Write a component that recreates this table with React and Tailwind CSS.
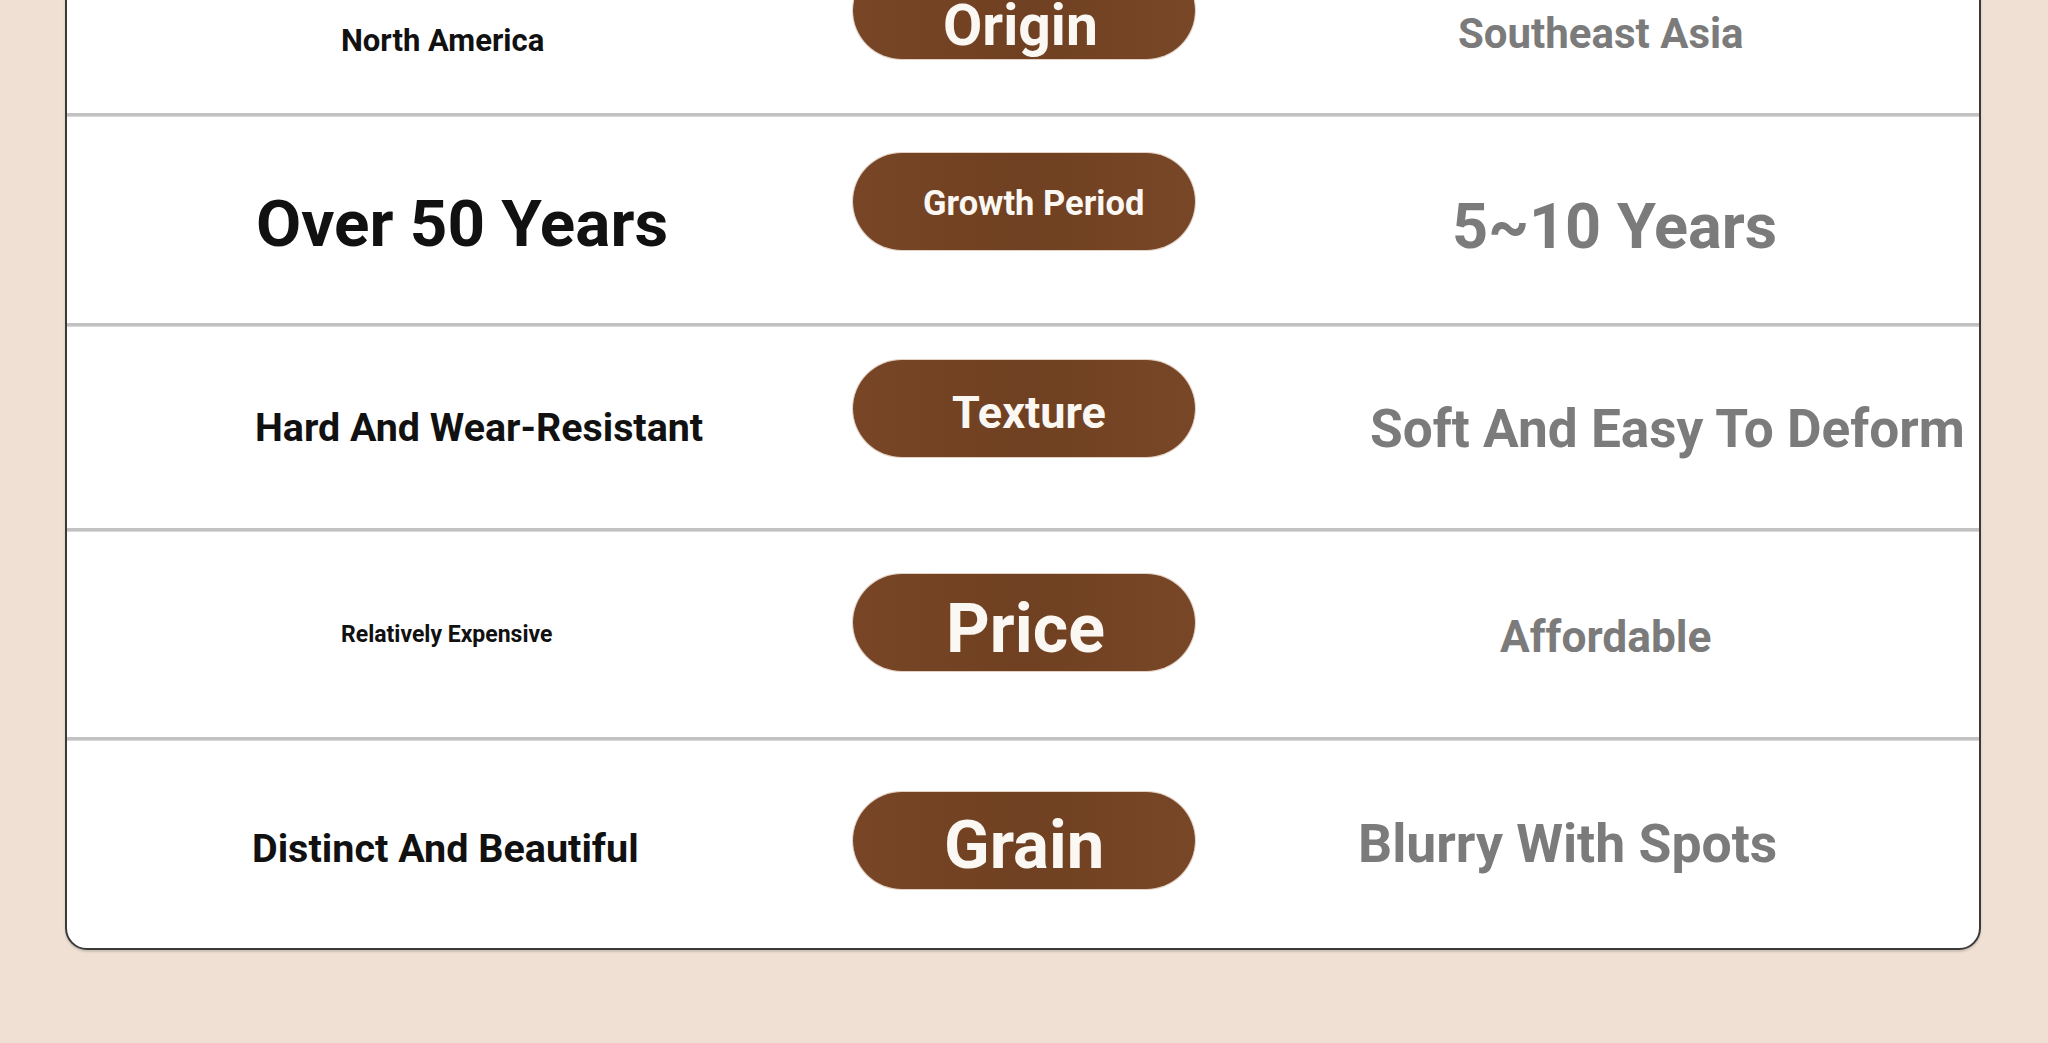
import React from "react";

const rows = [
  {
    h: "h-[206px]",
    left: { text: "North America", cls: "mt-[118px] pl-[274px] text-[31px]" },
    pill: { mt: "mt-[55px]", text: "Origin", cls: "pt-[35px] pl-[90px] text-[57px]" },
    right: { text: "Southeast Asia", cls: "mt-[106px] pl-[263px] text-[42px]" },
  },
  {
    h: "h-[206px]",
    left: { text: "Over 50 Years", cls: "mt-[74px] pl-[189px] text-[65.6px]" },
    pill: { mt: "mt-[36px]", text: "Growth Period", cls: "pt-[33px] pl-[70px] text-[34.5px]" },
    right: { text: "5~10 Years", cls: "mt-[78px] pl-[257px] text-[63px]" },
  },
  {
    h: "h-[201px]",
    left: { text: "Hard And Wear-Resistant", cls: "mt-[81px] pl-[188px] text-[39.4px]" },
    pill: { mt: "mt-[33px]", text: "Texture", cls: "pt-[30px] pl-[99px] text-[45px]" },
    right: { text: "Soft And Easy To Deform", cls: "mt-[76px] pl-[175px] text-[53.2px]" },
  },
  {
    h: "h-[205px]",
    left: { text: "Relatively Expensive", cls: "mt-[91px] pl-[274px] text-[23px]" },
    pill: { mt: "mt-[42px]", text: "Price", cls: "pt-[21px] pl-[93px] text-[68px]" },
    right: { text: "Affordable", cls: "mt-[83px] pl-[305px] text-[44.3px]" },
  },
  {
    h: "h-[207px]",
    left: { text: "Distinct And Beautiful", cls: "mt-[88px] pl-[185px] text-[39.5px]" },
    pill: { mt: "mt-[51px]", text: "Grain", cls: "pt-[20px] pl-[91px] text-[67px]" },
    right: { text: "Blurry With Spots", cls: "mt-[76px] pl-[163px] text-[53.5px]" },
  },
];

function Row({ row }) {
  return (
    <div className={`flex items-start ${row.h}`}>
      <div className="w-[786px] shrink-0">
        <div className={`font-bold leading-none whitespace-nowrap text-[#111111] ${row.left.cls}`}>
          {row.left.text}
        </div>
      </div>
      <div
        className={`w-[342px] h-[97px] shrink-0 rounded-full bg-gradient-to-r from-[#784627] via-[#6f4021] to-[#784727] shadow-[0_0_0_1px_rgba(190,150,120,0.45)] ${row.pill.mt}`}
      >
        <div className={`font-bold leading-none whitespace-nowrap text-[#fbf7f3] ${row.pill.cls}`}>
          {row.pill.text}
        </div>
      </div>
      <div className="flex-1 min-w-0">
        <div className={`font-bold leading-none whitespace-nowrap text-[#7b7b7b] ${row.right.cls}`}>
          {row.right.text}
        </div>
      </div>
    </div>
  );
}

export default function App() {
  return (
    <div
      className="h-[1043px] w-[2048px] overflow-hidden bg-[#efe0d3] pl-[65px] pr-[67px]"
      style={{ fontFamily: "Roboto, 'Liberation Sans', sans-serif" }}
    >
      <div className="-mt-[95px] rounded-[22px] border-2 border-[#3a3a3a] bg-white shadow-[0_2px_2px_rgba(0,0,0,0.15)]">
        {rows.map((row, i) => (
          <React.Fragment key={i}>
            <Row row={row} />
            {i < rows.length - 1 && (
              <div className="h-[4px] bg-[#c2c2c2] border-b border-[#d8d8d8]" />
            )}
          </React.Fragment>
        ))}
      </div>
    </div>
  );
}
